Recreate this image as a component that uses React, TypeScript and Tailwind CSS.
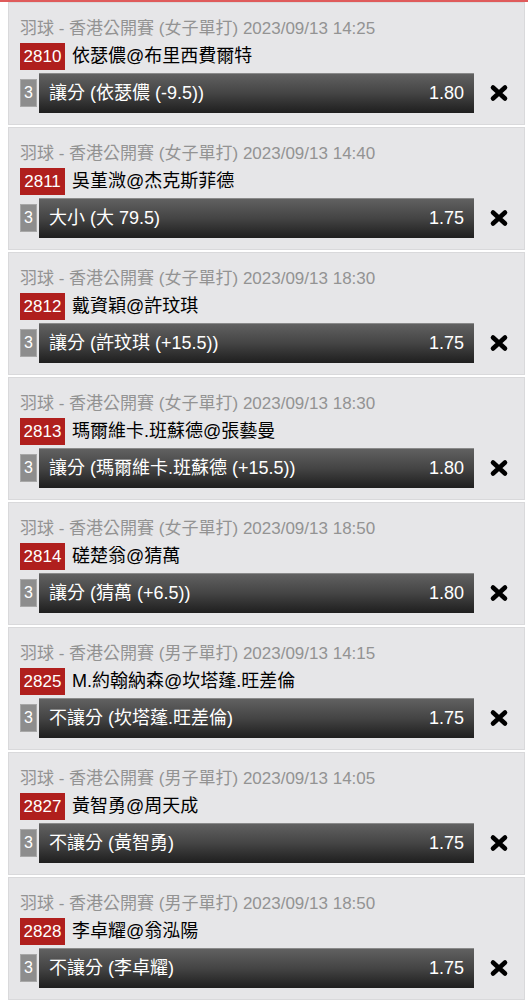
import React from "react";

type Bet = {
  no: string;
  title: string;
  match: string;
  pick: string;
  odds: string;
};

const bets: Bet[] = [
  { no: "2810", title: "羽球 - 香港公開賽 (女子單打) 2023/09/13 14:25", match: "依瑟儂@布里西費爾特", pick: "讓分 (依瑟儂 (-9.5))", odds: "1.80" },
  { no: "2811", title: "羽球 - 香港公開賽 (女子單打) 2023/09/13 14:40", match: "吳堇溦@杰克斯菲德", pick: "大小 (大 79.5)", odds: "1.75" },
  { no: "2812", title: "羽球 - 香港公開賽 (女子單打) 2023/09/13 18:30", match: "戴資穎@許玟琪", pick: "讓分 (許玟琪 (+15.5))", odds: "1.75" },
  { no: "2813", title: "羽球 - 香港公開賽 (女子單打) 2023/09/13 18:30", match: "瑪爾維卡.班蘇德@張藝曼", pick: "讓分 (瑪爾維卡.班蘇德 (+15.5))", odds: "1.80" },
  { no: "2814", title: "羽球 - 香港公開賽 (女子單打) 2023/09/13 18:50", match: "磋楚翁@猜萬", pick: "讓分 (猜萬 (+6.5))", odds: "1.80" },
  { no: "2825", title: "羽球 - 香港公開賽 (男子單打) 2023/09/13 14:15", match: "M.約翰納森@坎塔蓬.旺差倫", pick: "不讓分 (坎塔蓬.旺差倫)", odds: "1.75" },
  { no: "2827", title: "羽球 - 香港公開賽 (男子單打) 2023/09/13 14:05", match: "黃智勇@周天成", pick: "不讓分 (黃智勇)", odds: "1.75" },
  { no: "2828", title: "羽球 - 香港公開賽 (男子單打) 2023/09/13 18:50", match: "李卓耀@翁泓陽", pick: "不讓分 (李卓耀)", odds: "1.75" },
];

// 粗體 X 刪除圖示
const RemoveIcon = () => (
  <svg width="20" height="18" viewBox="0 0 20 18" className="text-black">
    <path
      d="M4 3.5 L16 14.5 M16 3.5 L4 14.5"
      stroke="currentColor"
      strokeWidth="4.6"
      strokeLinecap="round"
      fill="none"
    />
  </svg>
);

const BetCard: React.FC<{ bet: Bet }> = ({ bet }) => (
  <div className="bg-[#e6e6e8] border border-[#d9d9db] mb-[2px] pt-[16px] pb-[11px] pl-[11px]">
    {/* 賽事 */}
    <div className="text-[17px] leading-[20px] text-[#939393] whitespace-nowrap">
      {bet.title}
    </div>

    {/* 場次 */}
    <div className="flex items-center mt-[4px] h-[27px]">
      <span className="bg-[#b01f1d] text-white text-[17px] leading-[27px] h-[27px] w-[45px] text-center">
        {bet.no}
      </span>
      <span className="ml-[7px] text-[18px] text-black whitespace-nowrap">
        {bet.match}
      </span>
    </div>

    {/* 投注 */}
    <div className="flex items-center mt-[3px] h-[40px]">
      <span className="w-[17px] h-[28px] bg-[#8d8d8d] border border-[#a8a8a8] text-white text-[16px] leading-[26px] text-center">
        3
      </span>
      <div className="ml-[2px] w-[435px] h-[40px] flex items-center justify-between px-[10px] border-t border-[#8a8a8a] bg-gradient-to-b from-[#616161] via-[#444444] to-[#1f1f1f] text-white text-[18px]">
        <span className="whitespace-nowrap">{bet.pick}</span>
        <span>{bet.odds}</span>
      </div>
      <div className="flex-1 flex justify-center">
        <RemoveIcon />
      </div>
    </div>
  </div>
);

export default function App() {
  return (
    <div
      className="bg-white border-t-2 border-[#df5b5b] w-[528px] min-h-[1000px] pl-2 pr-[3px]"
      style={{ fontFamily: '"Liberation Sans", "Noto Sans CJK TC", sans-serif' }}
    >
      {bets.map((b) => (
        <BetCard key={b.no} bet={b} />
      ))}
    </div>
  );
}
